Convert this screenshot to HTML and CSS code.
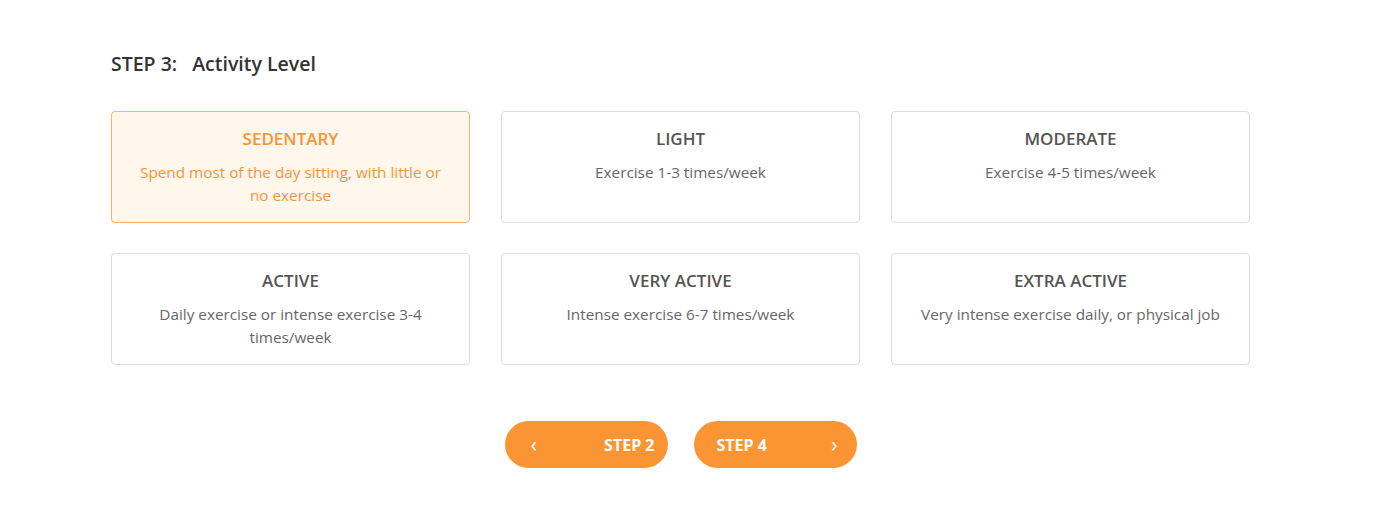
FILE: index.html
```html
<!DOCTYPE html>
<html lang="en">
<head>
    <meta charset="UTF-8">
    <meta name="viewport" content="width=device-width, initial-scale=1.0">
    <title>Activity Level</title>
    <link rel="stylesheet" href="styles.css">
</head>
<body>
    <main class="step">
        <h2 class="step-title"><span class="step-num">STEP 3:</span>Activity Level</h2>

        <div class="levels">
            <div class="level selected">
                <h3>SEDENTARY</h3>
                <p>Spend most of the day sitting, with little or no exercise</p>
            </div>
            <div class="level">
                <h3>LIGHT</h3>
                <p>Exercise 1-3 times/week</p>
            </div>
            <div class="level">
                <h3>MODERATE</h3>
                <p>Exercise 4-5 times/week</p>
            </div>
            <div class="level">
                <h3>ACTIVE</h3>
                <p>Daily exercise or intense exercise 3-4 times/week</p>
            </div>
            <div class="level">
                <h3>VERY ACTIVE</h3>
                <p>Intense exercise 6-7 times/week</p>
            </div>
            <div class="level">
                <h3>EXTRA ACTIVE</h3>
                <p>Very intense exercise daily, or physical job</p>
            </div>
        </div>

        <div class="nav-buttons">
            <button class="nav-btn prev"><span class="arrow">&lsaquo;</span>STEP 2</button>
            <button class="nav-btn next">STEP 4<span class="arrow">&rsaquo;</span></button>
        </div>
    </main>
</body>
</html>
```

FILE: styles.css
```css
* {
    margin: 0;
    padding: 0;
    box-sizing: border-box;
}
body {
    font-family: 'Open Sans', sans-serif;
    background-color: #fff;
    color: #555;
}
.step {
    width: 1139px;
    margin-left: 111px;
    padding-top: 50px;
}
.step-title {
    font-size: 19.5px;
    font-weight: 600;
    color: #333;
    line-height: 28px;
    margin-bottom: 33px;
}
.step-num {
    margin-right: 15px;
}
.levels {
    display: grid;
    grid-template-columns: repeat(3, 359px);
    column-gap: 31px;
    row-gap: 30px;
}
.level {
    min-height: 112px;
    border: 1px solid #dcdcdc;
    border-radius: 4px;
    padding: 15px 20px;
    text-align: center;
    cursor: pointer;
}
.level h3 {
    font-size: 17px;
    font-weight: 600;
    color: #555;
    line-height: 24px;
    margin-bottom: 10px;
}
.level p {
    font-size: 15.3px;
    line-height: 23px;
    color: #666;
}
.level.selected {
    background-color: #fff6ec;
    border-color: #f7b46c;
}
.level.selected h3,
.level.selected p {
    color: #f7943a;
}
.nav-buttons {
    display: flex;
    justify-content: center;
    gap: 26px;
    margin-top: 56px;
}
.nav-btn {
    width: 163px;
    height: 47px;
    border: none;
    border-radius: 24px;
    background-color: #fb9433;
    color: #fff;
    font-family: 'Open Sans', sans-serif;
    font-size: 16px;
    font-weight: 700;
    display: flex;
    align-items: center;
    justify-content: space-between;
    cursor: pointer;
}
.nav-btn.prev {
    padding: 0 13px 0 26px;
}
.nav-btn.next {
    padding: 0 19px 0 23px;
}
.arrow {
    font-size: 22px;
    font-weight: 400;
    line-height: 1;
    margin-top: -3px;
}
```
